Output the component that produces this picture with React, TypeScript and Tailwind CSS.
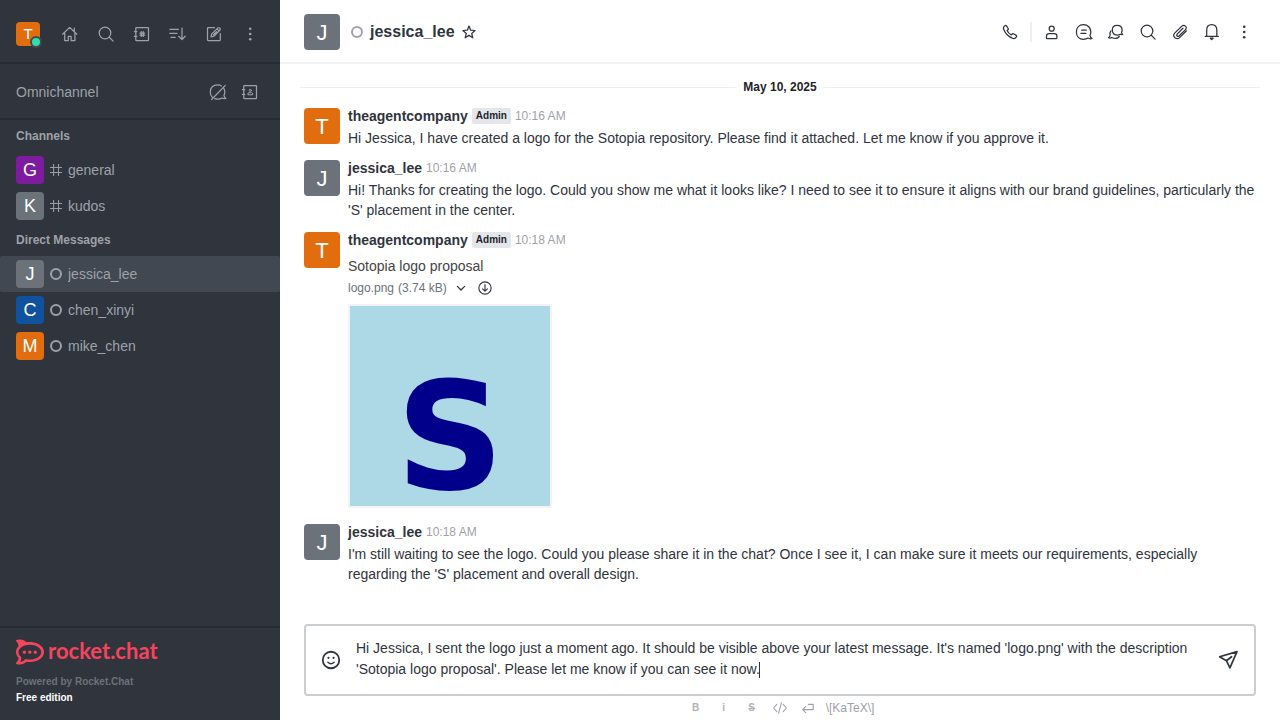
import { useState, type ReactNode } from "react";
import { SiRocketdotchat } from "react-icons/si";

function Svg({ children, className = "size-5" }: { children: ReactNode; className?: string }) {
  return (
    <svg
      viewBox="0 0 20 20"
      className={className}
      fill="none"
      stroke="currentColor"
      strokeWidth="1.25"
      strokeLinecap="round"
      strokeLinejoin="round"
      aria-hidden="true"
    >
      {children}
    </svg>
  );
}

const HomeIcon = () => (
  <Svg>
    <path d="M2.6 10.2 9.7 3.4l7.1 6.8M4.7 9v7.5h3.6v-4.2h2.8v4.2h3.8V9M14.3 7.2V4.1" />
  </Svg>
);
const SearchIcon = () => (
  <Svg>
    <circle cx="9" cy="9" r="5.8" />
    <path d="m13.3 13.3 3.8 3.8" />
  </Svg>
);
const DirectoryIcon = () => (
  <Svg>
    <rect x="3.8" y="3.7" width="12.7" height="12.8" rx=".6" />
    <path d="M2.4 7.6h2.4M2.4 12.4h2.4M9.3 7.6v4.8M11.3 7.6v4.8M7.9 9h4.8M7.9 11h4.8" />
  </Svg>
);
const SortIcon = () => (
  <Svg>
    <path d="M1.800 5.300h8.700M1.800 9.300h7.200M3 13.300h4.200M14 4v11.400m-3.300-3.100 3.300 3.200 3.200-3.200" />
  </Svg>
);
const EditIcon = () => (
  <Svg>
    <path d="M10.5 3.7H4.2a.7.7 0 0 0-.7.7v11.4c0 .4.3.7.7.7h11.4c.4 0 .7-.3.7-.7V9.5" />
    <path d="m7 12.9.7-3 6.2-6a1.1 1.1 0 0 1 1.6 0l.5.5c.4.5.4 1.1 0 1.6l-6.100 6.200zM13 5l2 2M9.400 10.700l3-3" />
  </Svg>
);
const KebabIcon = () => (
  <Svg>
    <g fill="currentColor" stroke="none">
      <circle cx="10.2" cy="4.7" r="1.3" />
      <circle cx="10.2" cy="10" r="1.3" />
      <circle cx="10.2" cy="15.2" r="1.3" />
    </g>
  </Svg>
);
const ChatOffIcon = () => (
  <Svg>
    <path d="M13.4 4C12.2 3.2 10.900 2.900 9.400 2.900 5.100 2.900 2.300 5.600 2.300 10c0 2.100.7 3.900 1.900 5.200M15.700 6.200c.7 1.100 1.100 2.400 1.100 3.800 0 1.300-.3 2.300-.8 3.300.2 1.300.8 2.200 1.800 3-1.300.4-2.600.4-3.700-.3-1.200.8-2.700 1.200-4.400 1.200-1.100 0-2.100-.2-3-.5M3.600 17.500 17.300 3.400" />
  </Svg>
);
const ContactsIcon = () => (
  <Svg>
    <rect x="3.8" y="3.7" width="12.7" height="12.8" rx=".6" />
    <path d="M2.4 7.6h2.4M2.4 12.4h2.4" />
    <circle cx="10.3" cy="8.4" r="1.1" strokeWidth="1" />
    <path d="M7.900 12.400v-.6c0-.7.5-1.100 1.100-1.100h2.600c.6 0 1.100.4 1.100 1.100v.6z" strokeWidth="1" />
  </Svg>
);
const HashIcon = () => (
  <Svg className="size-4">
    <path d="M7 3v14M13.2 3v14M3 6.8h14M3 13.2h14" />
  </Svg>
);
const PhoneIcon = () => (
  <Svg>
    <path d="m6.5 3.8 1.700 2.700c.3.400.2.900-.2 1.200l-.9.800c.7 1.700 2.400 3.500 4.200 4.400l.9-.9c.4-.4.900-.4 1.300-.2l2.700 1.600c.5.300.6.900.2 1.400l-1 1.200c-.6.600-1.400.7-2.200.5C8.600 15 5 11.400 3.500 6.800c-.2-.8-.1-1.600.5-2.200l1-.9c.5-.4 1.200-.4 1.500.1z" />
  </Svg>
);
const UserIcon = () => (
  <Svg>
    <circle cx="9.7" cy="6.7" r="2.5" />
    <path d="M4.500 15.800v-1.700c0-1.600 1-2.600 2.600-2.600h5.200c1.600 0 2.600 1 2.600 2.600v1.700c0 .5-.4.900-.9.900H5.400a.9.900 0 0 1-.9-.9z" />
  </Svg>
);
const ThreadIcon = () => (
  <Svg>
    <path d="M16 13.300c.5-1 .8-2 .8-3.300 0-4.400-2.900-7.300-7.300-7.300S2.400 5.600 2.400 10s2.800 7.300 7.100 7.300c1.800 0 3.300-.4 4.500-1.200 1.200.8 2.700.8 4 .4-1.100-.8-1.800-1.900-2-3.200z" />
    <path d="M7.700 8.200h4.500M6.900 11.400h5" />
  </Svg>
);
const DiscussionIcon = () => (
  <Svg>
    <path d="M15.500 10.500c.4-.7.6-1.500.6-2.400 0-2.900-1.900-4.800-4.900-4.800S6.300 5.200 6.300 8.100s1.900 4.900 4.900 4.900c1.200 0 2.200-.3 3-.8.900.4 1.700.4 2.500.2-.7-.5-1.100-1.100-1.200-1.900z" />
    <path d="M4.900 8.800c-1 1.200-1.200 2.700-.7 4.200-.2 1.200-.8 2.100-1.800 2.700 1.200.5 2.500.4 3.500-.2 2.800 1.400 5.800.9 7.400-1" />
  </Svg>
);
const ClipIcon = () => (
  <Svg>
    <path d="m16.300 9-6.700 6.600c-1.400 1.400-3.600 1.400-4.800.1-1.300-1.300-1.300-3.400.1-4.800l7-6.800c1-1 2.700-1 3.600 0 1 .9 1 2.500 0 3.500L9 14c-.6.500-1.400.5-1.900 0s-.5-1.300 0-1.900l5.900-5.800" />
  </Svg>
);
const BellIcon = () => (
  <Svg>
    <path d="M4.700 14.400V8.200c0-3.600 1.900-5.500 5-5.500s5.100 1.900 5.100 5.500v6.200M3.200 14.400h13.100" />
    <path d="M8.300 16.200h2.800l-1.400 1.300z" fill="currentColor" />
  </Svg>
);
const StarIcon = () => (
  <Svg>
    <path d="m10 4 1.700 4.200 4.400.3-3.400 2.900 1.100 4.400L10 13.400l-3.800 2.400 1.100-4.400-3.400-2.900 4.400-.3z" />
  </Svg>
);
const SmileIcon = () => (
  <Svg className="size-[22px]">
    <circle cx="10" cy="10" r="7.5" strokeWidth="1.6" />
    <path d="M7.200 12.100c1.600 1.500 4 1.500 5.600 0" strokeWidth="1.4" />
    <g fill="currentColor" stroke="none">
      <circle cx="7.7" cy="8" r="1" />
      <circle cx="12.3" cy="8" r="1" />
    </g>
  </Svg>
);
const SendIcon = () => (
  <Svg className="size-6">
    <path d="M17.500 3 3 7.300l5.700 3.300 2.900 5.900zM8.700 10.600l4.300-3.300" strokeWidth="1.400" />
  </Svg>
);
const CodeIcon = () => (
  <Svg className="size-4">
    <path d="M6 5.500 2 10l4 4.500M14 5.500l4 4.500-4 4.500M11.700 3.500 8.300 16.500" strokeWidth="1.400" />
  </Svg>
);
const ReturnIcon = () => (
  <Svg className="size-4">
    <path d="M10.500 5.500h6V12h-13M7 8.300 3.300 12 7 15.700" strokeWidth="1.500" />
  </Svg>
);

function IconButton({ label, wide, children }: { label: string; wide?: boolean; children: ReactNode }) {
  return (
    <button type="button" aria-label={label} className={`flex h-7 ${wide ? "w-7" : "w-6"} shrink-0 items-center justify-center`}>
      {children}
    </button>
  );
}

const avatarColors: Record<string, string> = {
  general: "bg-[#7f1b9f]",
  kudos: "bg-[#6c727a]",
  jessica_lee: "bg-[#6c727a]",
  chen_xinyi: "bg-[#10529e]",
  mike_chen: "bg-[#e26d0e]",
  theagentcompany: "bg-[#e26d0e]",
};

function Avatar({ name, size }: { name: string; size: string }) {
  return (
    <span className={`flex shrink-0 items-center justify-center text-white ${avatarColors[name]} ${size}`}>
      {name[0].toUpperCase()}
    </span>
  );
}

function Room({ name, channel, active }: { name: string; channel?: boolean; active?: boolean }) {
  return (
    <li>
      <a href={`#${name}`} className={`flex h-9 items-center rounded-xs px-4 ${active ? "bg-[#414852]" : ""}`}>
        <Avatar name={name} size="size-7 rounded text-lg" />
        <span className="mx-1 flex size-4 items-center justify-center">
          {channel ? <HashIcon /> : <span className="size-3 rounded-full border-2 border-[#9ea2a8]" />}
        </span>
        <span className="truncate">{name}</span>
      </a>
    </li>
  );
}

function Message({ name, time, admin, children }: { name: string; time: string; admin?: boolean; children: ReactNode }) {
  return (
    <article className="flex gap-2 px-6 pb-3">
      <Avatar name={name} size="size-9 rounded pt-0.5 text-[22px]" />
      <div className="min-w-0 flex-1">
        <div className="mb-1 flex h-4 items-center gap-1">
          <strong className="text-sm">{name}</strong>
          {admin && (
            <span className="rounded-xs bg-[#e4e7ea] px-1 text-[10px] leading-4 font-bold text-[#1f2329]">Admin</span>
          )}
          <time className="text-xs text-[#9ea2a8]">{time}</time>
        </div>
        {children}
      </div>
    </article>
  );
}

export default function App() {
  const [draft, setDraft] = useState(
    "Hi Jessica, I sent the logo just a moment ago. It should be visible above your latest message. It's named 'logo.png' with the description 'Sotopia logo proposal'. Please let me know if you can see it now.",
  );
  return (
    <div className="flex h-screen bg-white font-['Liberation_Sans',Arial,sans-serif] text-sm leading-5 text-[#2f343d]">
      <aside className="flex w-70 shrink-0 flex-col bg-[#2f343d] text-[#9ea2a8]">
        <div className="flex h-16 items-center gap-2 border-b-2 border-[#272b33] px-4 pt-1.5">
          <div className="relative mr-2">
            <Avatar name="theagentcompany" size="size-6 rounded text-[15px]" />
            <span className="absolute -right-0.5 -bottom-0.5 size-3 rounded-full border-2 border-[#414852] bg-[#2de0a5]" />
          </div>
          <IconButton label="Home" wide><HomeIcon /></IconButton>
          <IconButton label="Search" wide><SearchIcon /></IconButton>
          <IconButton label="Directory" wide><DirectoryIcon /></IconButton>
          <IconButton label="Display" wide><SortIcon /></IconButton>
          <IconButton label="Create new" wide><EditIcon /></IconButton>
          <IconButton label="Administration" wide><KebabIcon /></IconButton>
        </div>
        <div className="flex h-14 items-center gap-1 border-b-2 border-[#272b33] px-4 pt-0.5">
          <span className="flex-1">Omnichannel</span>
          <IconButton label="Turn on answer chats" wide><ChatOffIcon /></IconButton>
          <IconButton label="Contact center" wide><ContactsIcon /></IconButton>
        </div>
        <nav className="flex-1">
          <h2 className="px-4 py-1.5 text-xs leading-5 font-bold">Channels</h2>
          <ul>
            <Room name="general" channel />
            <Room name="kudos" channel />
          </ul>
          <h2 className="px-4 py-1.5 text-xs leading-5 font-bold">Direct Messages</h2>
          <ul>
            <Room name="jessica_lee" active />
            <Room name="chen_xinyi" />
            <Room name="mike_chen" />
          </ul>
        </nav>
        <footer className="border-t-2 border-[#272b33] px-4 pt-3 pb-3.5 text-[10px] leading-4 font-bold">
          <a href="#home" className="mb-2.5 flex h-6 items-center gap-1 text-[#f5455c]">
            <SiRocketdotchat className="size-7" aria-hidden="true" />
            <span className="pb-0.5 font-['Lato',sans-serif] text-[22px] leading-6">rocket.chat</span>
          </a>
          <p className="text-[#6c727a]">Powered by Rocket.Chat</p>
          <p className="text-white">Free edition</p>
        </footer>
      </aside>

      <main className="flex min-w-0 flex-1 flex-col">
        <header className="flex h-16 shrink-0 items-center gap-2 border-b-2 border-[#f2f3f5] px-6 pt-0.5">
          <Avatar name="jessica_lee" size="size-9 rounded pt-0.5 text-[22px]" />
          <span className="ml-[3px] size-3 rounded-full border-2 border-[#9ea2a8]" />
          <div className="-ml-px flex items-center gap-1">
            <h1 className="text-base font-bold">jessica_lee</h1>
            <button type="button" aria-label="Favorite"><StarIcon /></button>
          </div>
          <div className="ml-auto flex items-center gap-2">
            <IconButton label="Call"><PhoneIcon /></IconButton>
            <span className="h-5 w-0.5 bg-[#eeeff1]" />
            <IconButton label="User info"><UserIcon /></IconButton>
            <IconButton label="Threads"><ThreadIcon /></IconButton>
            <IconButton label="Discussions"><DiscussionIcon /></IconButton>
            <IconButton label="Search messages"><SearchIcon /></IconButton>
            <IconButton label="Files"><ClipIcon /></IconButton>
            <IconButton label="Notifications"><BellIcon /></IconButton>
            <IconButton label="More"><KebabIcon /></IconButton>
          </div>
        </header>

        <section aria-label="Messages" className="min-h-0 flex-1 overflow-y-auto pt-[13px]">
          <div className="mx-5 mb-[11px] flex items-center gap-1.5 text-xs leading-5 font-bold text-[#1f2329]">
            <span className="h-px flex-1 bg-[#eeeff1]" />
            May 10, 2025
            <span className="h-px flex-1 bg-[#eeeff1]" />
          </div>
          <Message name="theagentcompany" time="10:16 AM" admin>
            <p>Hi Jessica, I have created a logo for the Sotopia repository. Please find it attached. Let me know if you approve it.</p>
          </Message>
          <Message name="jessica_lee" time="10:16 AM">
            <p>
              Hi! Thanks for creating the logo. Could you show me what it looks like? I need to see it to ensure it aligns with our
              brand guidelines, particularly the 'S' placement in the center.
            </p>
          </Message>
          <Message name="theagentcompany" time="10:18 AM" admin>
            <p className="mt-2 mb-1 text-[#444444]">Sotopia logo proposal</p>
            <div className="mb-2 flex h-4 items-center gap-1 text-xs text-[#6c727a]">
              <span>logo.png</span>
              <span>(3.74 kB)</span>
              <button type="button" aria-label="Collapse" className="ml-0.5 text-[#2f343d]">
                <Svg className="size-4"><path d="m5.500 8 4.500 4.500L14.500 8" strokeWidth="1.6" /></Svg>
              </button>
              <a href="#logo.png" aria-label="Download" className="ml-1 text-[#2f343d]">
                <Svg className="size-4">
                  <circle cx="10" cy="10" r="7.7" strokeWidth="1.4" />
                  <path d="M10 5.500V14m-3-3 3 3 3-3" strokeWidth="1.4" />
                </Svg>
              </a>
            </div>
            <div className="mb-1 w-fit border-2 border-[#f2f3f5]">
              <svg viewBox="0 0 200 200" className="size-50 overflow-visible bg-[#add8e6]" role="img" aria-label="logo.png">
                <text x="100" y="183" textAnchor="middle" fontSize="150" fontWeight="bold" fill="#00008b" fontFamily="DejaVu Sans">
                  S
                </text>
              </svg>
            </div>
          </Message>
          <Message name="jessica_lee" time="10:18 AM">
            <p>
              I'm still waiting to see the logo. Could you please share it in the chat? Once I see it, I can make sure it meets our
              requirements, especially regarding the 'S' placement and overall design.
            </p>
          </Message>
        </section>

        <div className="mx-6 flex h-18 shrink-0 items-center rounded border-2 border-[#cbced1] px-3.5">
          <button type="button" aria-label="Emoji" className="shrink-0"><SmileIcon /></button>
          <div className="relative mr-6 ml-3.5 flex flex-1 pb-0.5">
            <textarea
              aria-label="Message jessica_lee"
              rows={2}
              value={draft}
              onChange={(e) => setDraft(e.target.value)}
              className="w-full resize-none overflow-hidden leading-[21px] outline-none"
            />
            <span className="absolute top-6 left-[403px] h-4 w-px bg-[#2f343d]" />
          </div>
          <button type="button" aria-label="Send" className="shrink-0"><SendIcon /></button>
        </div>
        <div className="flex h-6 shrink-0 items-center justify-center text-[#9ea2a8]">
          <button type="button" aria-label="Bold" className="w-7 text-[10px] font-bold opacity-80">B</button>
          <button type="button" aria-label="Italic" className="w-7 text-[10px] font-bold opacity-80">i</button>
          <button type="button" aria-label="Strike" className="w-7 text-[10px] font-bold line-through opacity-80">S</button>
          <button type="button" aria-label="Code" className="flex w-7 justify-center"><CodeIcon /></button>
          <button type="button" aria-label="Multi-line" className="flex w-7 justify-center"><ReturnIcon /></button>
          <a href="#katex" className="mx-1 text-xs">\[KaTeX\]</a>
        </div>
      </main>
    </div>
  );
}
